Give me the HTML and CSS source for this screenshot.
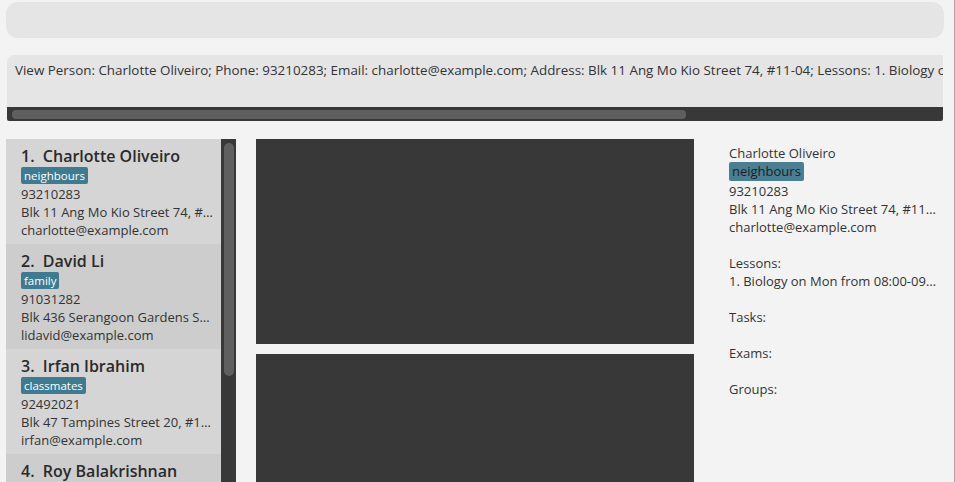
FILE: index.html
```html
<!DOCTYPE html>
<html>
<head>
<meta charset="utf-8">
<link rel="stylesheet" href="styles.css">
</head>
<body>
<div class="app">
  <div class="command-box"></div>
  <div class="result">
    <div class="result-text">View Person: Charlotte Oliveiro; Phone: 93210283; Email: charlotte@example.com; Address: Blk 11 Ang Mo Kio Street 74, #11-04; Lessons: 1. Biology on Mon from 08:00-09:00</div>
    <div class="hscroll"><div class="hthumb"></div></div>
  </div>
  <div class="main">
    <div class="list-wrap">
      <div class="list">
        <div class="card">
          <div class="name">1.&nbsp;&nbsp;Charlotte Oliveiro</div>
          <div class="tags"><span class="tag">neighbours</span></div>
          <div class="line">93210283</div>
          <div class="line">Blk 11 Ang Mo Kio Street 74, #11-04</div>
          <div class="line">charlotte@example.com</div>
        </div>
        <div class="card alt">
          <div class="name">2.&nbsp;&nbsp;David Li</div>
          <div class="tags"><span class="tag">family</span></div>
          <div class="line">91031282</div>
          <div class="line">Blk 436 Serangoon Gardens Street 26, #16-43</div>
          <div class="line">lidavid@example.com</div>
        </div>
        <div class="card">
          <div class="name">3.&nbsp;&nbsp;Irfan Ibrahim</div>
          <div class="tags"><span class="tag">classmates</span></div>
          <div class="line">92492021</div>
          <div class="line">Blk 47 Tampines Street 20, #17-35</div>
          <div class="line">irfan@example.com</div>
        </div>
        <div class="card alt">
          <div class="name">4.&nbsp;&nbsp;Roy Balakrishnan</div>
          <div class="tags"><span class="tag">colleagues</span></div>
          <div class="line">92624417</div>
        </div>
      </div>
      <div class="vscroll"><div class="vthumb"></div></div>
    </div>
    <div class="middle">
      <div class="dark-panel top"></div>
      <div class="dark-panel bottom"></div>
    </div>
    <div class="detail">
      <div class="line">Charlotte Oliveiro</div>
      <div class="dtags"><span class="dtag">neighbours</span></div>
      <div class="line">93210283</div>
      <div class="line">Blk 11 Ang Mo Kio Street 74, #11-04</div>
      <div class="line">charlotte@example.com</div>
      <div class="blank"></div>
      <div class="line">Lessons:</div>
      <div class="line">1. Biology on Mon from 08:00-09:00</div>
      <div class="blank"></div>
      <div class="line">Tasks:</div>
      <div class="blank"></div>
      <div class="line">Exams:</div>
      <div class="blank"></div>
      <div class="line">Groups:</div>
    </div>
  </div>
</div>
</body>
</html>
```
FILE: styles.css
```css
* { box-sizing: border-box; }
html, body { margin: 0; padding: 0; }
body {
  background: #f3f3f3;
  font-family: "Open Sans", "DejaVu Sans", sans-serif;
  color: #333333;
  font-size: 13px;
  overflow: hidden;
}
.app {
  width: 955px;
  height: 482px;
  border-right: 1px solid #a9a9a9;
  display: flex;
  flex-direction: column;
  overflow: hidden;
}
.command-box {
  margin: 2px 0 0 6px;
  width: 938px;
  height: 36px;
  background: #e5e5e5;
  border-radius: 12px;
  flex: none;
}
.result {
  margin: 17px 0 0 7px;
  width: 936px;
  flex: none;
}
.result-text {
  height: 52px;
  background: #e5e5e5;
  border-radius: 8px 0 0 0;
  padding: 6px 0 0 8px;
  font-size: 13.4px;
  line-height: 18px;
  white-space: nowrap;
  overflow: hidden;
  color: #333;
}
.hscroll {
  height: 14px;
  background: #383838;
  padding: 3px 0 0 5px;
  border-radius: 0 0 2px 2px;
}
.hthumb {
  width: 674px;
  height: 9px;
  background: #5f5f5f;
  border-radius: 4px;
}
.main {
  display: flex;
  margin-top: 18px;
  flex: 1;
  min-height: 0;
}
.list-wrap {
  margin-left: 6px;
  width: 230px;
  display: flex;
  flex: none;
}
.list {
  width: 215px;
  overflow: hidden;
}
.card {
  background: #d5d5d5;
  padding: 6px 8px 5px 15px;
  height: 105px;
}
.card.alt { background: #cdcdcd; }
.name {
  font-size: 16px;
  font-weight: 600;
  line-height: 22px;
  color: #2a2a2a;
  white-space: nowrap;
}
.tags {
  height: 18px;
  display: flex;
}
.tag {
  background: #3e7b91;
  color: #ffffff;
  font-size: 11.5px;
  line-height: 17px;
  height: 17px;
  padding: 0 3px;
  border-radius: 2px;
}
.line {
  line-height: 18px;
  white-space: nowrap;
  overflow: hidden;
  text-overflow: ellipsis;
}
.vscroll {
  width: 15px;
  background: #383838;
  padding: 4px 2px 0 3px;
}
.vthumb {
  width: 10px;
  height: 233px;
  background: #5f5f5f;
  border-radius: 5px;
}
.middle {
  margin-left: 20px;
  width: 438px;
  flex: none;
  display: flex;
  flex-direction: column;
  gap: 10px;
}
.dark-panel { background: #383838; }
.dark-panel.top { height: 205px; flex: none; }
.dark-panel.bottom { flex: 1; }
.detail {
  padding: 5px 14px 0 35px;
  width: 259px;
  flex: none;
}
.dtags { height: 20px; display: flex; }
.dtag {
  background: #4a7f93;
  color: #1e1e1e;
  line-height: 19px;
  height: 19px;
  padding: 0 3px;
  border-radius: 2px;
}
.blank { height: 18px; }
```
